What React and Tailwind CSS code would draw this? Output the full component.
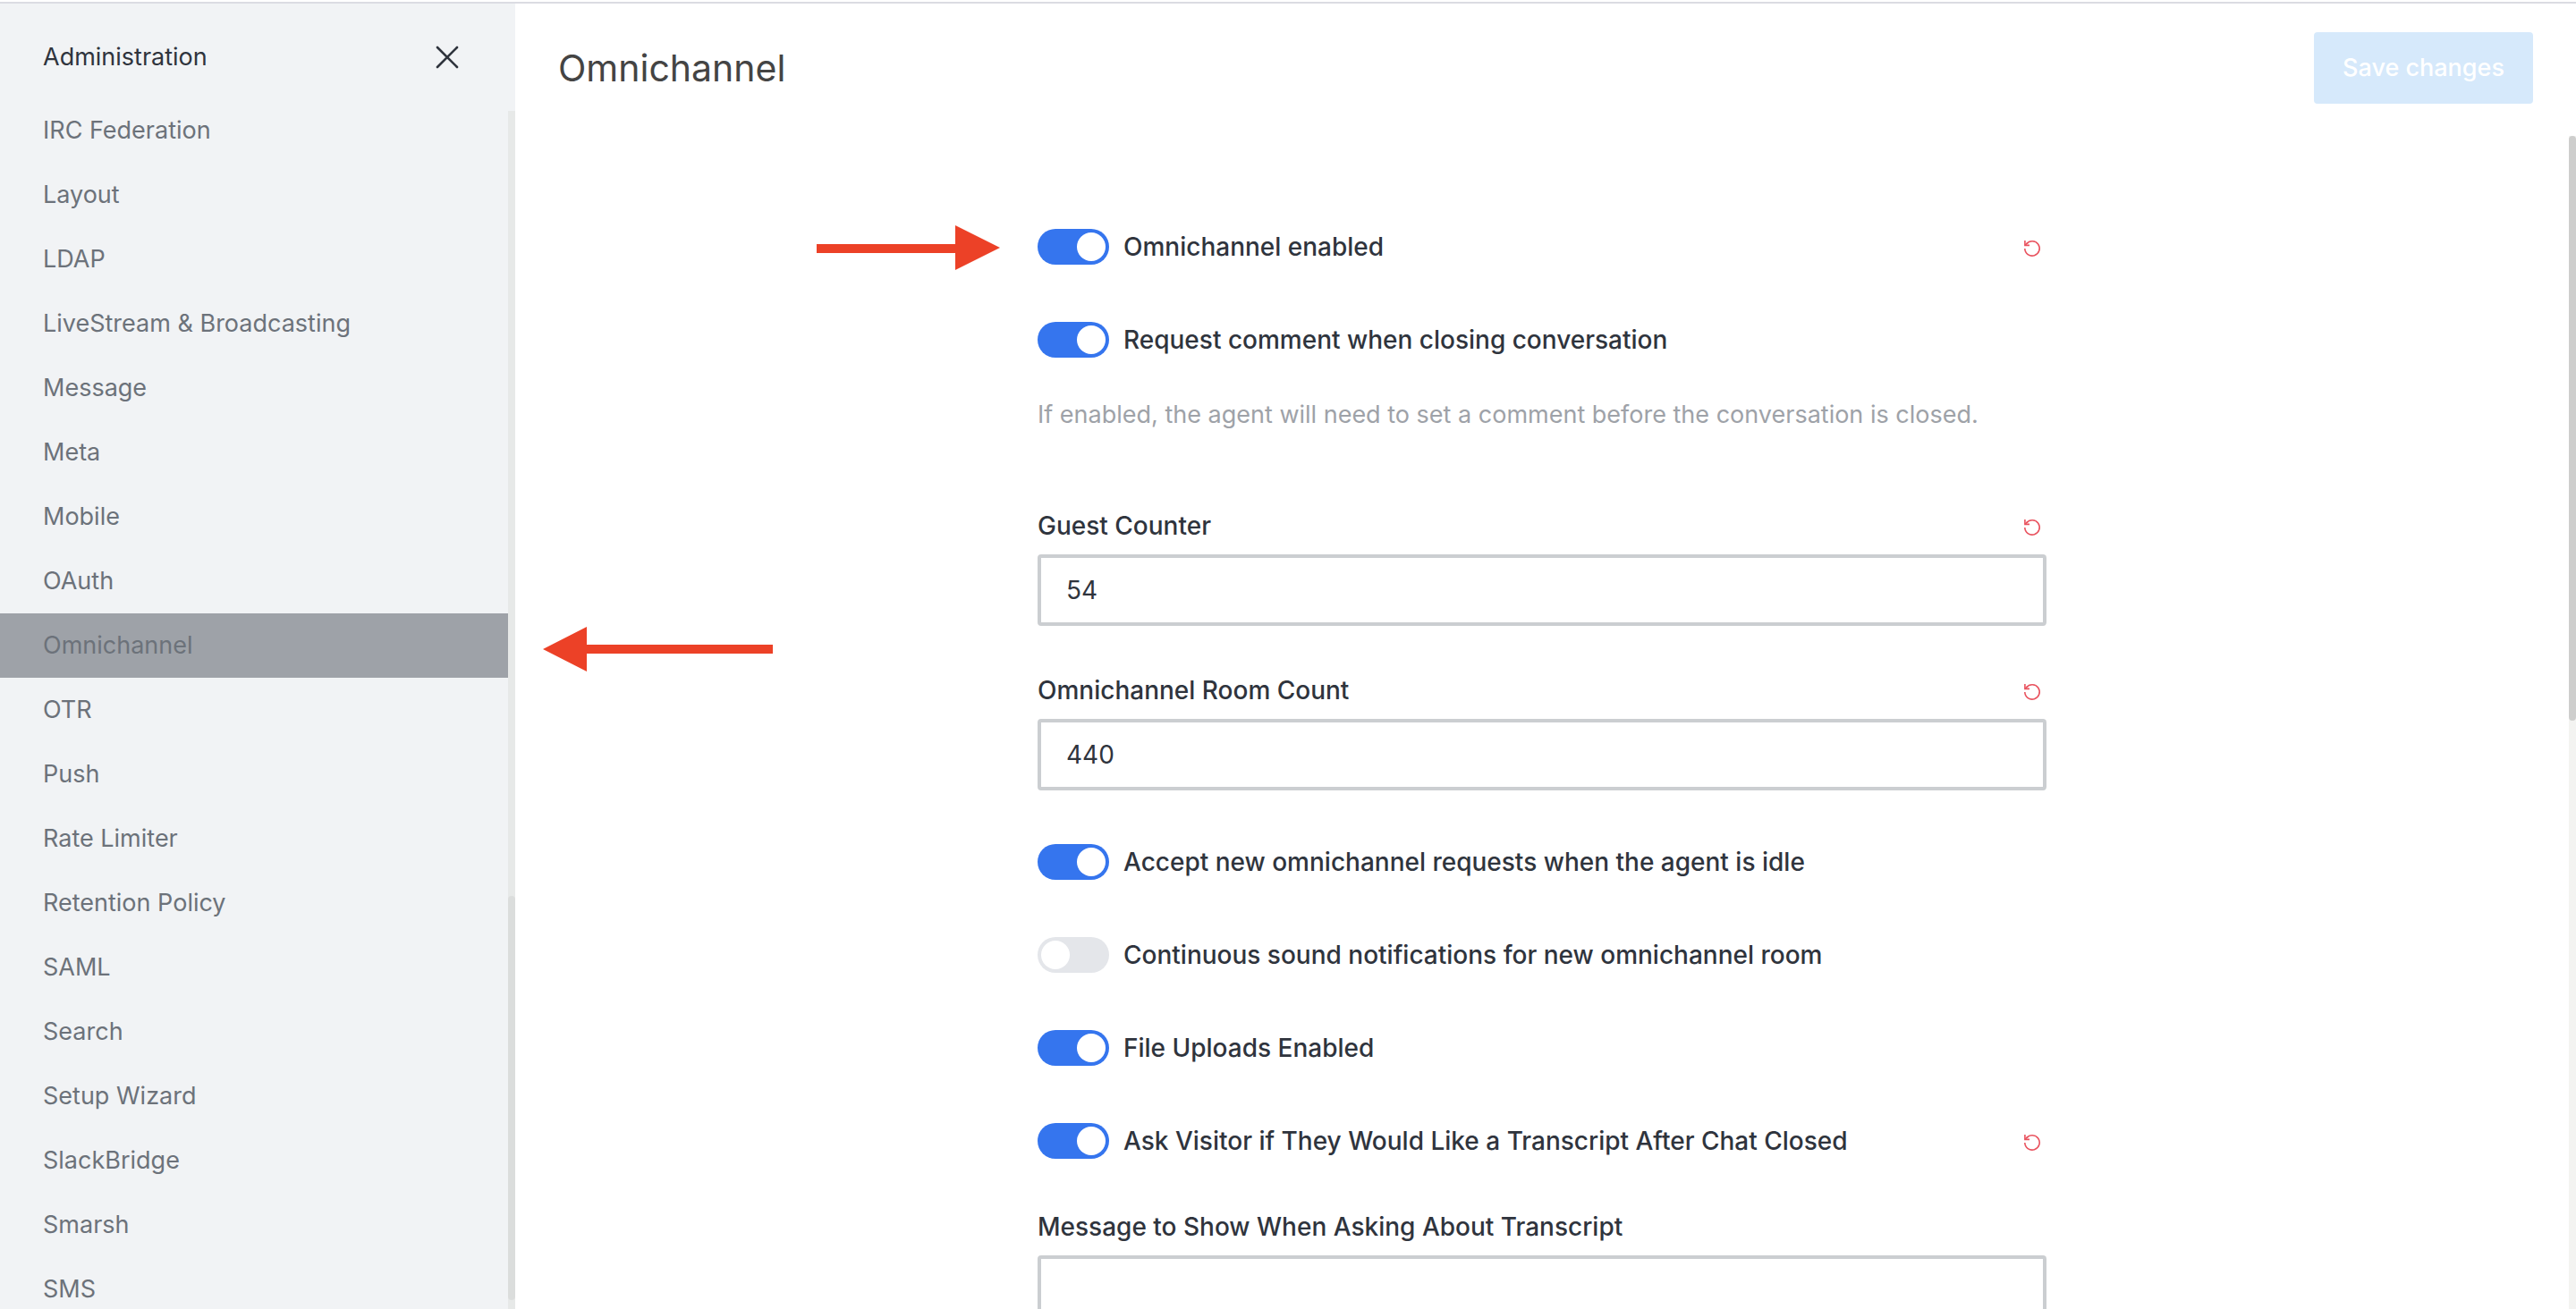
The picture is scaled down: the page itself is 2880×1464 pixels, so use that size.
const NAV_ITEMS = [
  'IRC Federation',
  'Layout',
  'LDAP',
  'LiveStream & Broadcasting',
  'Message',
  'Meta',
  'Mobile',
  'OAuth',
  'Omnichannel',
  'OTR',
  'Push',
  'Rate Limiter',
  'Retention Policy',
  'SAML',
  'Search',
  'Setup Wizard',
  'SlackBridge',
  'Smarsh',
  'SMS',
];

function CloseIcon() {
  return (
    <svg className="size-8" viewBox="0 0 32 32" fill="none" stroke="currentColor" strokeWidth="2.6" strokeLinecap="round" aria-hidden="true">
      <path d="M5 5L27 27M27 5L5 27" />
    </svg>
  );
}

function ResetButton({ name }) {
  return (
    <button type="button" aria-label={`Reset ${name}`} className="shrink-0 text-[#e9535f]">
      <svg className="size-8" viewBox="0 0 32 32" fill="none" stroke="currentColor" strokeWidth="1.6" aria-hidden="true">
        <path d="M7.8 18A8.2 8.2 0 1 0 9.6 12.8" />
        <path d="M7.9 9V14.4H13" />
        <path d="M8.2 14.2L10.8 11.6" />
      </svg>
    </button>
  );
}

function ToggleField({ id, label, checked, reset, className = '' }) {
  return (
    <div className={`flex h-10 items-center ${className}`}>
      <input
        id={id}
        type="checkbox"
        role="switch"
        defaultChecked={checked}
        className="h-10 w-20 shrink-0 appearance-none rounded-full bg-[#e4e6ea] p-1 before:block before:size-8 before:rounded-full before:bg-white checked:bg-[#3575ee] checked:before:ml-10"
      />
      <label htmlFor={id} className="ml-4 grow font-medium">
        {label}
      </label>
      {reset && <ResetButton name={label} />}
    </div>
  );
}

function TextField({ id, label, value, reset, multiline, className = '' }) {
  const box = 'block w-full rounded-sm border-4 border-[#cbced1] bg-white px-7 outline-none';
  return (
    <div className={className}>
      <div className="mb-3 flex h-10 items-center">
        <label htmlFor={id} className="grow font-medium">
          {label}
        </label>
        {reset && <ResetButton name={label} />}
      </div>
      {multiline ? (
        <textarea id={id} rows={4} defaultValue={value} className={`${box} resize-none py-4`} />
      ) : (
        <input id={id} type="text" defaultValue={value} className={`${box} h-20`} />
      )}
    </div>
  );
}

function Sidebar() {
  return (
    <aside className="flex w-[576px] shrink-0 flex-col bg-[#f1f3f5] text-[27px]">
      <div className="flex h-[120px] shrink-0 items-center justify-between pr-15 pl-12">
        <h2>Administration</h2>
        <button type="button" aria-label="Close">
          <CloseIcon />
        </button>
      </div>
      <div className="flex min-h-0 grow">
        <nav className="min-w-0 grow">
          <ul className="-mt-[14px]">
            {NAV_ITEMS.map((item) => {
              const active = item === 'Omnichannel';
              return (
                <li key={item}>
                  <a
                    href="#"
                    aria-current={active ? 'page' : undefined}
                    className={`flex h-18 items-center pl-12 text-[#6c727a] ${active ? 'bg-[#9ea2a8]' : ''}`}
                  >
                    {item}
                  </a>
                </li>
              );
            })}
          </ul>
        </nav>
        <div className="flex w-2 shrink-0 flex-col justify-end bg-[#e7e9e8] pb-[10px]">
          <div className="h-[452px] rounded-full bg-[#dbdddc]" />
        </div>
      </div>
    </aside>
  );
}

export default function App() {
  return (
    <div className="relative flex h-screen flex-col overflow-hidden bg-white pt-0.5 font-['Inter',sans-serif] text-[28px] leading-10 text-[#2f343d]">
      <div className="h-0.5 shrink-0 bg-[#dbdce2]" />
      <div className="flex min-h-0 grow">
        <Sidebar />
        <main className="flex min-w-0 grow flex-col">
          <header className="flex h-[148px] shrink-0 items-start justify-between px-12 pt-8">
            <h1 className="text-[41px] leading-20 text-[#444444]">Omnichannel</h1>
            <button type="button" disabled className="h-20 rounded-sm bg-[#d6e9fb] px-8 text-[27px] font-medium text-white">
              Save changes
            </button>
          </header>
          <div className="flex min-h-0 grow">
            <form className="min-w-0 grow pt-26">
              <div className="mx-auto max-w-[1128px]">
                <div className="relative">
                  <ToggleField id="enabled" label="Omnichannel enabled" checked reset />
                  <svg className="absolute top-[-4px] right-full mr-[42px] h-[50px] w-[205px] text-[#ec4127]" viewBox="0 0 205 50" fill="currentColor" aria-hidden="true">
                    <path d="M0 21H155V0L205 25L155 50V31H0Z" />
                  </svg>
                </div>
                <ToggleField id="comment" label="Request comment when closing conversation" checked className="mt-16" />
                <p className="mt-11 text-[27px] text-[#9ea2a8]">
                  If enabled, the agent will need to set a comment before the conversation is closed.
                </p>
                <TextField id="guests" label="Guest Counter" value="54" reset className="mt-21" />
                <TextField id="rooms" label="Omnichannel Room Count" value="440" reset className="mt-13" />
                <ToggleField id="idle" label="Accept new omnichannel requests when the agent is idle" checked className="mt-15" />
                <ToggleField id="sound" label="Continuous sound notifications for new omnichannel room" className="mt-16" />
                <ToggleField id="uploads" label="File Uploads Enabled" checked className="mt-16" />
                <ToggleField id="transcript" label="Ask Visitor if They Would Like a Transcript After Chat Closed" checked reset className="mt-16" />
                <TextField id="message" label="Message to Show When Asking About Transcript" multiline className="mt-14" />
              </div>
            </form>
            <div className="w-2 shrink-0 bg-[#f3f3f1]">
              <div className="h-[654px] rounded-full bg-[#cececd]" />
            </div>
          </div>
        </main>
      </div>
      <svg className="absolute top-[701px] left-[607px] h-[50px] w-[257px] text-[#ec4127]" viewBox="0 0 257 50" fill="currentColor" aria-hidden="true">
        <path d="M257 20H49V0L0 25L49 50V30H257Z" />
      </svg>
    </div>
  );
}
